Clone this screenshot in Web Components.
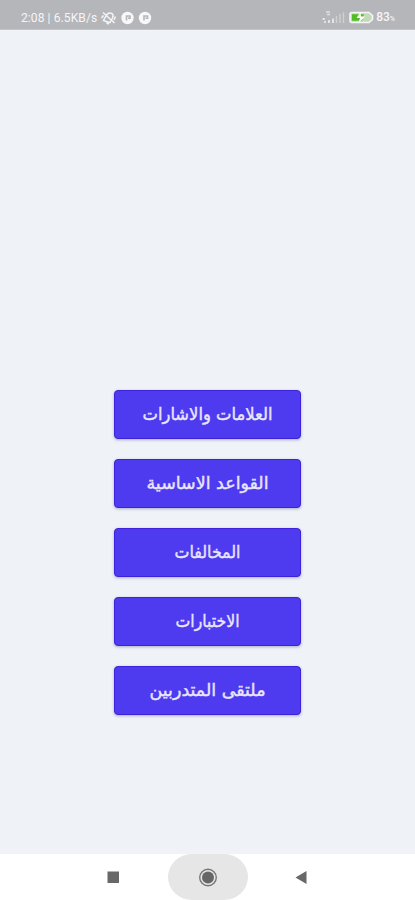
<!DOCTYPE html>
<html lang="ar">
<head>
<meta charset="utf-8">
<title>القائمة</title>
<style>
html,body{margin:0;height:100%;overflow:hidden;background:#eff3f8}
</style>
</head>
<body>
<phone-screen>
  <status-bar slot="top"></status-bar>
  <menu-button width="130">العلامات والاشارات</menu-button>
  <menu-button width="122">القواعد الاساسية</menu-button>
  <menu-button width="66">المخالفات</menu-button>
  <menu-button width="64">الاختبارات</menu-button>
  <menu-button width="116">ملتقى المتدربين</menu-button>
  <nav-bar slot="bottom"></nav-bar>
</phone-screen>
<script>
function define(name, html, setup) {
  const template = document.createElement('template');
  template.innerHTML = html;
  customElements.define(name, class extends HTMLElement {
    connectedCallback() {
      if (this.shadowRoot) return;
      this.attachShadow({ mode: 'open' }).append(template.content.cloneNode(true));
      if (setup) setup(this);
    }
  });
}

define('phone-screen', `
<style>
:host{display:flex;flex-direction:column;width:415px;height:900px;background:#eff3f8}
main{flex:1;box-sizing:border-box;padding:359.5px 0 0 114px;display:flex;flex-direction:column;align-items:flex-start;gap:20.2px}
</style>
<slot name="top"></slot><main><slot></slot></main><slot name="bottom"></slot>`);

define('status-bar', `
<style>
:host{display:flex;box-sizing:border-box;height:30px;padding:6px 19px 0 21px;background:#b5b6ba;color:#f5f5f7;border-bottom:1px solid #c3c5ca;font:12px/24px Roboto,sans-serif;justify-content:space-between}
div{display:flex;height:24px;align-items:center}
svg{display:block}
.time{width:77px;white-space:nowrap;letter-spacing:.1px}
.pct{font-size:12px;font-weight:500;margin-left:2px;margin-right:1px}
small{font-size:7px}
</style>
<div><span class="time">2:08 | 6.5KB/s</span>
<svg width="56" height="18" viewBox="98 9 56 18" fill="none" stroke="#f5f5f7">
<path d="M103.500 20.500L106.500 15Q108.500 12 112 13.500Q114 15 112.500 18L110 22.500Q107 22 103.500 20.500ZM106.500 23L109 24M103 12.500L114.500 23M103.500 15.500L101.500 18M115.500 16.500L114 20" stroke-width="1.500"/>
<g fill="#f8f8fa" stroke="none"><circle cx="127.500" cy="18" r="6.200"/><circle cx="145" cy="18" r="6.200"/></g>
<path d="M126.500 20.500V16H130V18.300H128M144 20.500V16H147.500V18.300H145.500" stroke="#b5b6ba" stroke-width="1.600"/>
</svg></div>
<div>
<svg width="54" height="18" viewBox="319 9 54 18" fill="none">
<path d="M325 12H329M326 14.500H329" stroke="#e0e1e3" stroke-width="1.300"/>
<path d="M321.500 19H324M323 22H325M328 20V23M332 18.500V23" stroke="#f1f1f3" stroke-width="1.600"/>
<path d="M335.500 16V23M339 14V23M342.500 12.500V23" stroke="#d0d1d4" stroke-width="1.400"/>
<path d="M351 12.500H368L371.500 15.500V19.500L368 22.500H351Q349 22.500 349 20.500V14.500Q349 12.500 351 12.500Z" fill="#c3dab9" stroke="#f5f5f7" stroke-width="1.600"/>
<path d="M351 14.300H363L361 20.700H351Z" fill="#50bd25"/>
<path d="M359.500 12L355.500 18H359L357.500 23L364 16.500H360Z" fill="#fff"/>
</svg><span class="pct">83<small>%</small></span></div>`);

define('menu-button', `
<style>
:host{display:block;width:187px;height:49px}
button{display:block;width:100%;height:100%;box-sizing:border-box;padding:0;border:1px solid #3d22d9;border-radius:4px;background:#4f3bef;box-shadow:0 1px 3px rgba(55,50,120,.38)}
svg{display:block;width:185px;height:47px}
text{font:500 17.5px "DejaVu Sans",sans-serif;fill:#e9e6ff;stroke:#e9e6ff;stroke-width:.4px;direction:rtl;text-anchor:middle}
</style>
<button><svg viewBox="0 0 185 47"><text x="92.5" y="29" lengthAdjust="spacingAndGlyphs"></text></svg></button>`,
host => {
  const label = host.shadowRoot.querySelector('text');
  label.textContent = host.textContent.trim();
  label.setAttribute('textLength', host.getAttribute('width'));
});

define('nav-bar', `
<style>
:host{display:flex;height:46px;background:#fff;box-sizing:border-box}
svg{display:block}
</style>
<svg width="415" height="46" viewBox="0 854 415 46">
<path d="M192 854H224A24 23 0 0 1 248 877A24 23 0 0 1 224 900H192A24 23 0 0 1 168 877A24 23 0 0 1 192 854Z" fill="#e6e6e6"/>
<path d="M107.500 871.500H119V883H107.500ZM306.500 871V884L295.500 877.500Z" fill="#686868"/>
<circle cx="208" cy="877.500" r="8.300" fill="none" stroke="#777" stroke-width="1.400"/><circle cx="208" cy="877.500" r="6" fill="#666"/>
</svg>`);
</script>
</body>
</html>
